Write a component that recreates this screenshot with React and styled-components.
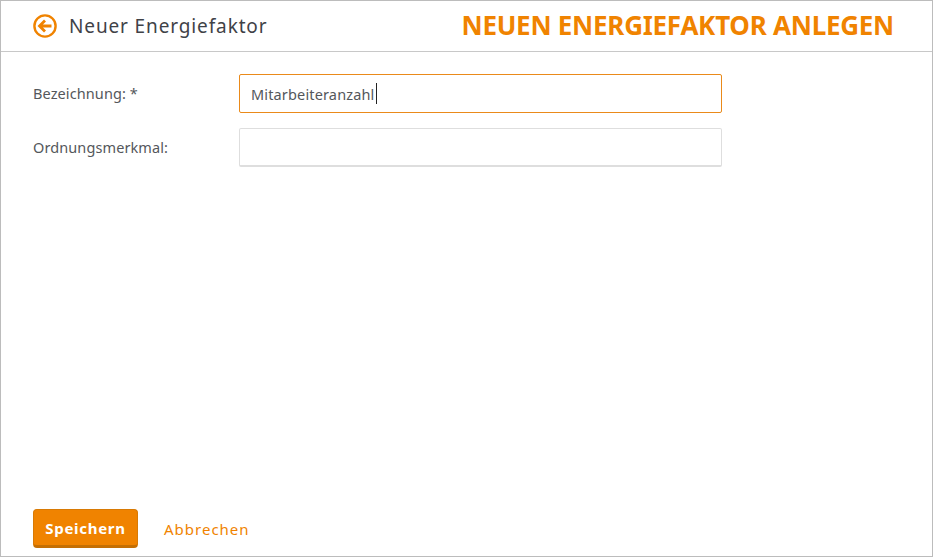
import React from "react"
import styled, { createGlobalStyle } from "styled-components"

const orange = "#f08300"

const GlobalStyle = createGlobalStyle`
  html, body {
    margin: 0;
    padding: 0;
    background: #fff;
  }
  body {
    font-family: "Noto Sans", "Open Sans", sans-serif;
  }
`

const Frame = styled.div`
  box-sizing: border-box;
  width: 933px;
  height: 557px;
  display: flex;
  flex-direction: column;
  border: 1px solid #bcbcbc;
  background: #fff;
`

const Header = styled.header`
  box-sizing: border-box;
  height: 51px;
  flex: none;
  display: flex;
  align-items: center;
  padding: 0 38px 0 32px;
  border-bottom: 1px solid #c8c8c8;
`

const BackLink = styled.a`
  display: flex;
  align-items: center;
  gap: 12px;
  color: #3f4247;
  text-decoration: none;
  font-size: 19px;
  letter-spacing: 0.87px;
`

const PageTitle = styled.h1`
  margin: -2px 0 0 auto;
  color: ${orange};
  font-family: "Noto Sans", sans-serif;
  font-size: 26px;
  font-weight: 700;
  letter-spacing: -0.25px;
  white-space: nowrap;
`

const Form = styled.form`
  flex: 1;
  display: flex;
  flex-direction: column;
  gap: 15px;
  padding: 22px 32px 0;
`

const Row = styled.div`
  display: flex;
  align-items: center;
`

const Label = styled.label`
  width: 206px;
  flex: none;
  margin-top: -1px;
  color: #54575b;
  font-size: 14.5px;
  letter-spacing: 0.1px;
`

const Field = styled.div`
  box-sizing: border-box;
  width: 483px;
  height: 39px;
  display: flex;
  align-items: center;
  padding: 0 11px;
  border: 1px solid ${(p) => (p.$focused ? "#ea8a1a" : "#dedede")};
  border-bottom-width: ${(p) => (p.$focused ? "1px" : "2px")};
  border-radius: 2px;
  color: #54575b;
  font-size: 14.5px;
  letter-spacing: 0.15px;
`

const Caret = styled.span`
  width: 1px;
  height: 21px;
  margin-left: 1px;
  background: #222;
`

const Footer = styled.footer`
  flex: none;
  display: flex;
  align-items: center;
  gap: 26px;
  padding: 0 32px 8px;
`

const SaveButton = styled.button`
  box-sizing: border-box;
  width: 105px;
  height: 39px;
  padding: 0;
  border: 1px solid #d87a04;
  border-bottom: 3px solid #c56f03;
  border-radius: 4px;
  background: ${orange};
  color: #fff;
  font-family: inherit;
  font-size: 15px;
  font-weight: 700;
  letter-spacing: 0.7px;
`

const CancelLink = styled.a`
  color: ${orange};
  font-size: 15px;
  letter-spacing: 1px;
  text-decoration: none;
`

const BackIcon = () => (
  <svg width="24" height="24" viewBox="0 0 24 24" fill="none" stroke={orange} strokeWidth="2.4">
    <circle cx="12" cy="12" r="10.6" />
    <path d="M18.5 12H6.5M12 6.5L6.5 12l5.5 5.5" strokeWidth="2.8" />
  </svg>
)

export default function App() {
  return (
    <>
      <GlobalStyle />
      <Frame>
        <Header>
          <BackLink href="#">
            <BackIcon />
            Neuer Energiefaktor
          </BackLink>
          <PageTitle>NEUEN ENERGIEFAKTOR ANLEGEN</PageTitle>
        </Header>
        <Form>
          <Row>
            <Label>Bezeichnung: *</Label>
            <Field $focused>
              Mitarbeiteranzahl
              <Caret />
            </Field>
          </Row>
          <Row>
            <Label>Ordnungsmerkmal:</Label>
            <Field />
          </Row>
        </Form>
        <Footer>
          <SaveButton type="button">Speichern</SaveButton>
          <CancelLink href="#">Abbrechen</CancelLink>
        </Footer>
      </Frame>
    </>
  )
}
